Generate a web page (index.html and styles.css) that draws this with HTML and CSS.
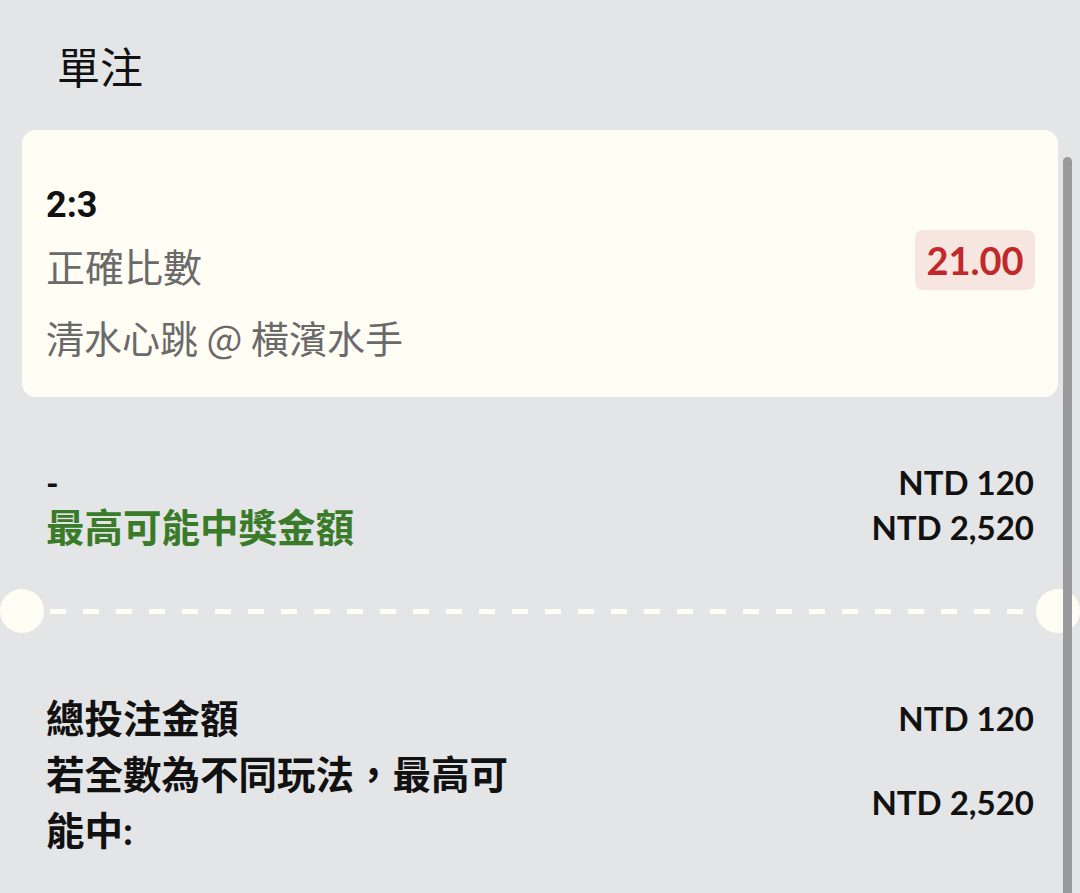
FILE: index.html
```html
<!DOCTYPE html>
<html lang="zh-Hant">
<head>
    <meta charset="UTF-8">
    <meta name="viewport" content="width=device-width, initial-scale=1.0">
    <title>單注</title>
    <link rel="stylesheet" href="styles.css">
</head>
<body>

    <div class="page">
        <h1 class="title">單注</h1>

        <div class="card">
            <div class="pick">
                <div class="score">2:3</div>
                <div class="market">正確比數</div>
                <div class="match">清水心跳 @ 橫濱水手</div>
            </div>
            <div class="odds">21.00</div>
        </div>

        <div class="summary">
            <div class="row">
                <span class="stake">-</span>
                <span class="amount">NTD 120</span>
            </div>
            <div class="row">
                <span class="win-label">最高可能中獎金額</span>
                <span class="amount">NTD 2,520</span>
            </div>
        </div>

        <div class="divider">
            <span class="notch"></span>
            <span class="dashes"></span>
            <span class="notch"></span>
        </div>

        <div class="totals">
            <div class="label">總投注金額</div>
            <div class="amount">NTD 120</div>
            <div class="label wrap">若全數為不同玩法，最高可能中:</div>
            <div class="amount">NTD 2,520</div>
        </div>

        <div class="scrollbar"></div>
    </div>

</body>
</html>
```

FILE: styles.css
```css
body {
    margin: 0;
    padding: 0;
    background: #e4e5e7;
    font-family: Lato, "Noto Sans CJK TC", sans-serif;
    color: #111;
}
.page {
    position: relative;
    width: 1080px;
    height: 893px;
    overflow: hidden;
}
.title {
    margin: 0;
    padding-left: 57px;
    height: 130px;
    line-height: 130px;
    font-size: 43px;
    font-weight: 400;
    font-family: "Noto Sans CJK TC", sans-serif;
}
.card {
    margin: 0 22px;
    padding: 48px 23px 29px 24px;
    background: #fffdf4;
    border-radius: 14px;
    display: flex;
    justify-content: space-between;
    align-items: flex-start;
}
.score {
    font-family: Roboto, sans-serif;
    font-size: 36px;
    font-weight: 700;
    line-height: 54px;
}
.market {
    margin-top: 2px;
    font-family: "Noto Sans CJK TC", sans-serif;
    font-size: 39px;
    line-height: 62px;
    color: #6a6a6a;
}
.match {
    margin-top: 10px;
    font-family: "Noto Sans CJK TC", sans-serif;
    font-size: 38px;
    line-height: 62px;
    color: #6a6a6a;
}
.odds {
    margin-top: 52px;
    width: 120px;
    height: 60px;
    line-height: 60px;
    text-align: center;
    background: #f7e5df;
    border-radius: 8px;
    color: #c0282a;
    font-size: 38px;
    font-weight: 700;
}
.summary {
    margin-top: 63px;
    padding: 0 46px;
}
.row {
    display: flex;
    justify-content: space-between;
    line-height: 45px;
}
.stake {
    font-size: 34px;
    font-weight: 700;
}
.win-label {
    font-size: 38.5px;
    font-weight: 700;
    color: #3a7b2a;
}
.amount {
    font-size: 33px;
    font-weight: 700;
}
.divider {
    margin-top: 39px;
    display: flex;
    align-items: center;
    height: 44px;
}
.notch {
    width: 44px;
    height: 44px;
    border-radius: 50%;
    background: #fffdf4;
}
.dashes {
    flex: 1;
    margin: 0 6px;
    height: 5px;
    background: repeating-linear-gradient(90deg, #fffdf4 0, #fffdf4 16px, transparent 16px, transparent 33px);
}
.totals {
    margin-top: 57px;
    padding: 0 46px;
    display: grid;
    grid-template-columns: 1fr auto;
    align-items: center;
}
.totals .label {
    font-size: 38.5px;
    font-weight: 700;
    line-height: 56px;
}
.totals .amount {
    justify-self: end;
}
.totals .wrap {
    max-width: 475px;
}
.scrollbar {
    position: absolute;
    top: 157px;
    right: 8px;
    bottom: -10px;
    width: 9px;
    border-radius: 5px;
    background: #9a9a9c;
}
```
